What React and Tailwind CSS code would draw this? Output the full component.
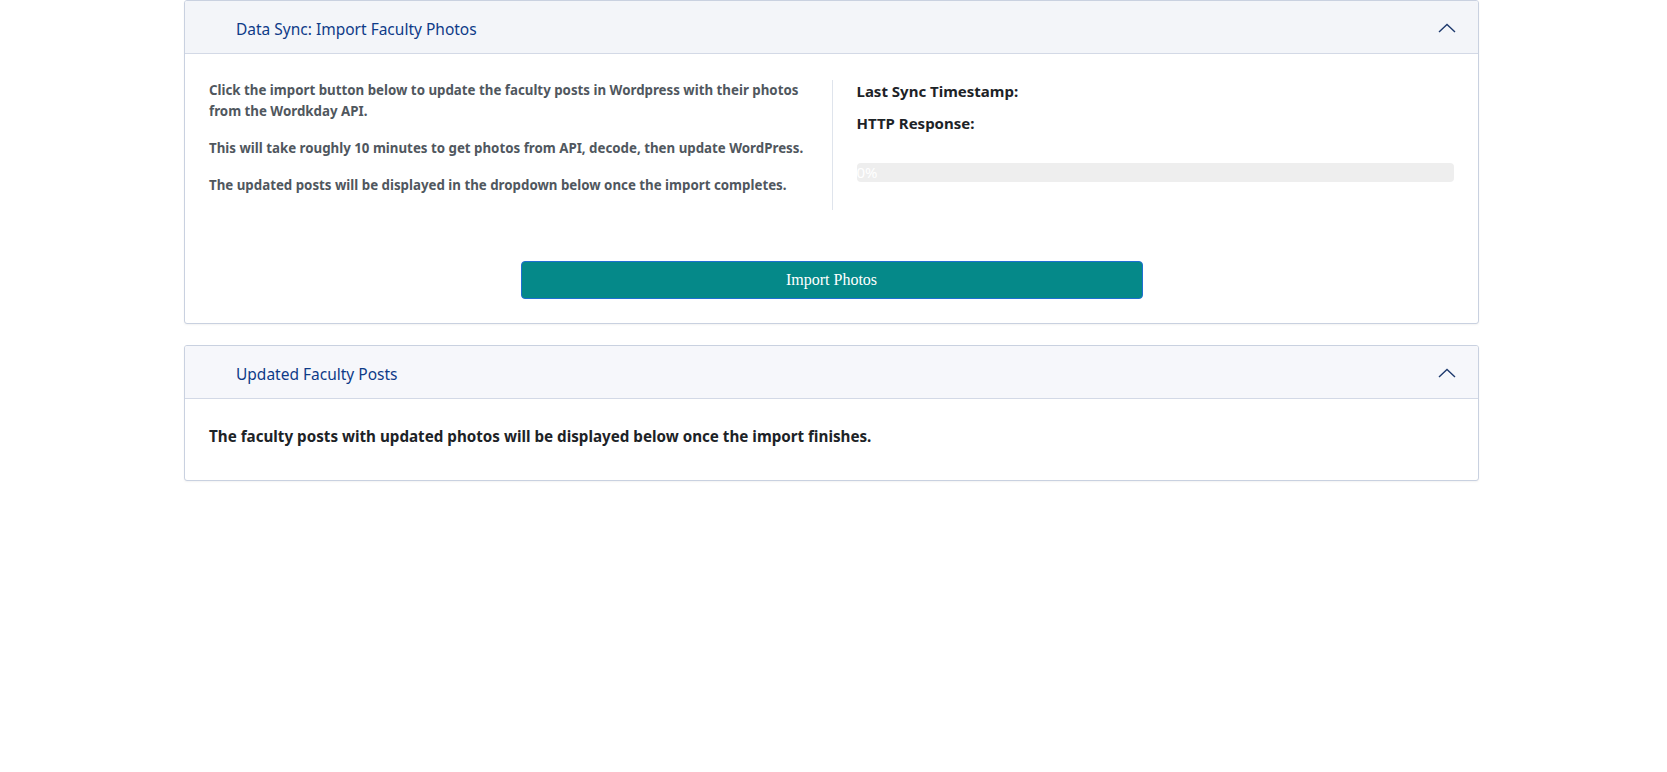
import React from "react";

function Chevron() {
  return (
    <svg width="18" height="10" viewBox="0 0 18 10" fill="none" className="text-[#1e3a6e]">
      <path d="M1 9 L9 1.5 L17 9" stroke="currentColor" strokeWidth="1.4" />
    </svg>
  );
}

function CardHeader({ title, bg }) {
  return (
    <div className={`flex items-center justify-between h-[53px] pl-[51px] pr-[22px] pt-[6px] border-b border-[#d3d9e6] ${bg}`}>
      <span className="text-[15.5px] text-[#0e3b88]">{title}</span>
      <span className="-mt-[4px]"><Chevron /></span>
    </div>
  );
}

export default function App() {
  return (
    <div className="min-h-[772px] bg-white" style={{ fontFamily: '"Noto Sans", "Open Sans", sans-serif' }}>
      <div className="w-[1295px] ml-[184px] flex flex-col gap-[21px]">
        <div className="border border-[#c9d1e0] rounded-[3px] bg-white overflow-hidden shadow-[0_1px_2px_rgba(0,0,0,0.05)]">
          <CardHeader title="Data Sync: Import Faculty Photos" bg="bg-[#f3f5f9]" />
          <div className="px-6 pt-[26px] pb-[24px]">
            <div className="grid grid-cols-2">
              <div className="pr-6 text-[13.3px] leading-[21px] font-bold text-[#50575e] pb-[14px]">
                <p className="mb-4">Click the import button below to update the faculty posts in Wordpress with their photos from the Wordkday API.</p>
                <p className="mb-4">This will take roughly 10 minutes to get photos from API, decode, then update WordPress.</p>
                <p>The updated posts will be displayed in the dropdown below once the import completes.</p>
              </div>
              <div className="border-l border-[#dfe4ec] pl-6">
                <p className="text-[15px] leading-[22px] font-bold text-[#1d2327]">Last Sync Timestamp:</p>
                <p className="mt-[10px] text-[15px] leading-[22px] font-bold text-[#1d2327]">HTTP Response:</p>
                <div className="mt-[29px] h-[19px] rounded-[4px] bg-[#eeeeee] flex items-center">
                  <span className="text-[15px] text-white leading-none">0%</span>
                </div>
              </div>
            </div>
            <div className="flex justify-center mt-[51px]">
              <button
                className="w-[622px] h-[38px] rounded-[4px] bg-[#058989] border border-[#1f6fd1] text-white text-[16px]"
                style={{ fontFamily: '"Liberation Serif", serif' }}
              >
                Import Photos
              </button>
            </div>
          </div>
        </div>

        <div className="border border-[#c9d1e0] rounded-[3px] bg-white overflow-hidden shadow-[0_1px_2px_rgba(0,0,0,0.05)]">
          <CardHeader title="Updated Faculty Posts" bg="bg-[#f6f7fb]" />
          <div className="px-6 pt-[26px] pb-[33px]">
            <p className="text-[15.2px] leading-[22px] font-bold text-[#1d2327]">
              The faculty posts with updated photos will be displayed below once the import finishes.
            </p>
          </div>
        </div>
      </div>
    </div>
  );
}
